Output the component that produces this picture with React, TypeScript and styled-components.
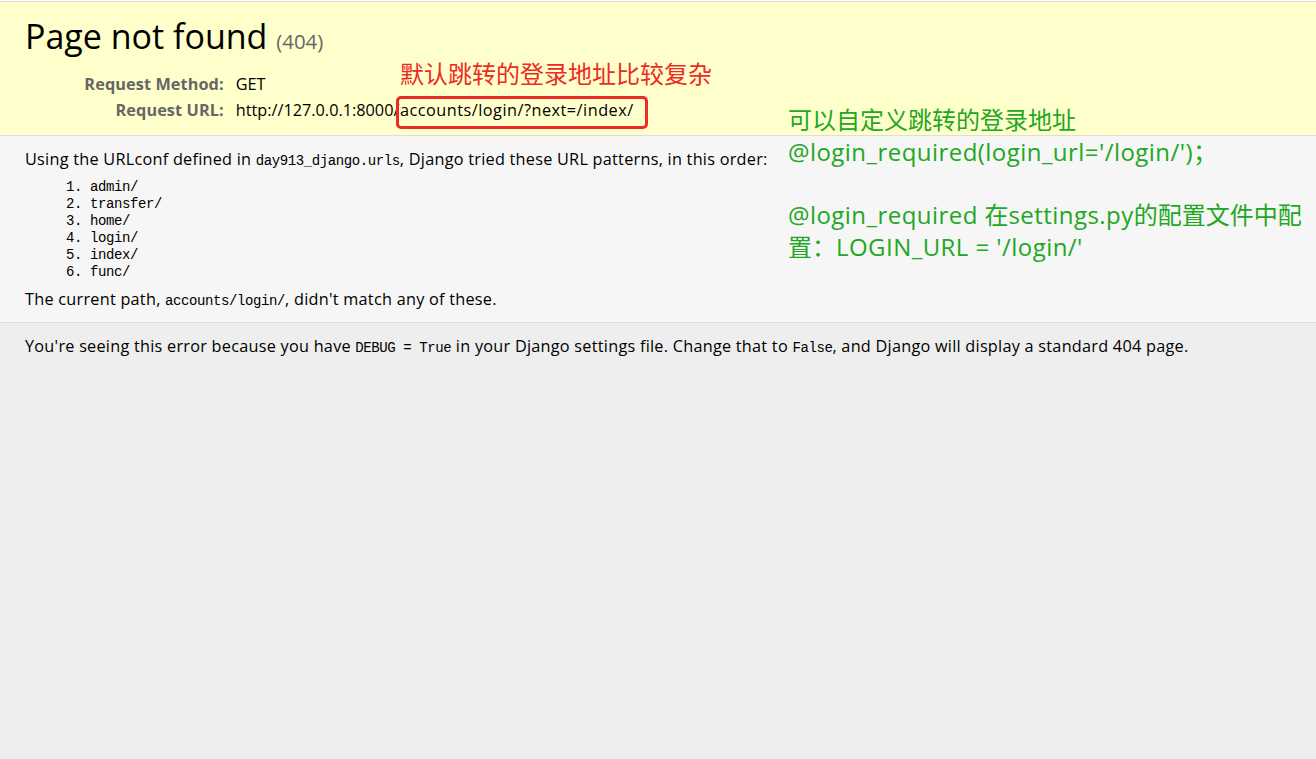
import React from "react";
import styled, { createGlobalStyle } from "styled-components";

const Global = createGlobalStyle`
  html, body { margin: 0; padding: 0; }
  body { background: #eee; }
  * { box-sizing: content-box; }
`;

const sans = `"Open Sans", "Noto Sans CJK SC", sans-serif`;
const mono = `"Liberation Mono", "DejaVu Sans Mono", monospace`;

const Page = styled.div`
  position: relative;
  min-height: 100vh;
  background: #eee;
  border-top: 1px solid #fff;
  font-family: ${sans};
  font-size: 16.25px;
  letter-spacing: 0.25px;
  color: #000;
`;

const Section = styled.div<{ $bg: string; $pt: number; $pb: number; $last?: boolean }>`
  background: ${(p) => p.$bg};
  padding: ${(p) => `${p.$pt}px 25px ${p.$pb}px`};
  border-bottom: ${(p) => (p.$last ? "none" : "1px solid #ddd")};
`;

const Summary = styled(Section)`
  border-top: 1px solid #ddd;
`;

const Title = styled.h1`
  margin: 0 0 10px;
  font-weight: normal;
  font-size: 34px;
  letter-spacing: 0;
  line-height: 42px;
`;

const Code = styled.span`
  color: #666;
  font-size: 60%;
`;

const Meta = styled.div`
  display: grid;
  grid-template-columns: 206.75px auto;
`;

const MetaLabel = styled.div`
  padding: 2.5px 8px 2.5px 3.75px;
  text-align: right;
  font-weight: bold;
  color: #666;
  line-height: 21px;
  letter-spacing: 0.1px;
`;

const MetaValue = styled.div`
  padding: 2.5px 3.75px 2.5px 4px;
  line-height: 21px;
  letter-spacing: 0;
`;

const UrlPath = styled.span`
  letter-spacing: 0.5px;
`;

const Para = styled.p`
  margin: 0;
  line-height: 22px;
`;

const Tt = styled.code`
  font-family: ${mono};
  font-size: 14px;
  letter-spacing: -0.4px;
`;

const Patterns = styled.ol`
  margin: 7px 65px 7px;
  padding: 0;
`;

const Pattern = styled.li`
  font-family: ${mono};
  font-size: 14px;
  line-height: 17px;
  letter-spacing: -0.4px;
`;

const RedNote = styled.div`
  position: absolute;
  left: 400px;
  top: 56px;
  font-family: "Noto Sans CJK SC", sans-serif;
  font-size: 24px;
  line-height: 32px;
  letter-spacing: 0;
  color: #ee2a24;
  white-space: nowrap;
`;

const RedBox = styled.div`
  position: absolute;
  left: 396px;
  top: 95px;
  width: 246px;
  height: 27px;
  border: 3px solid #ee2a24;
  border-radius: 5px;
`;

const GreenNote = styled.div`
  position: absolute;
  left: 788px;
  top: 102px;
  font-family: "Open Sans", "Noto Sans CJK SC", sans-serif;
  font-size: 24px;
  line-height: 31px;
  letter-spacing: 0.45px;
  color: #22a722;
  white-space: pre;
`;

const GreenCjk = styled.span`
  font-family: "Noto Sans CJK SC", sans-serif;
  letter-spacing: 0;
`;

export default function App() {
  const patterns = ["admin/", "transfer/", "home/", "login/", "index/", "func/"];
  return (
    <Page>
      <Global />
      <Summary $bg="#ffc" $pt={12.5} $pb={11}>
        <Title>
          Page not found <Code>(404)</Code>
        </Title>
        <Meta>
          <MetaLabel>Request Method:</MetaLabel>
          <MetaValue>GET</MetaValue>
          <MetaLabel>Request URL:</MetaLabel>
          <MetaValue>
            http://127.0.0.1:8000<UrlPath>/accounts/login/?next=/index/</UrlPath>
          </MetaValue>
        </Meta>
      </Summary>
      <Section $bg="#f6f6f6" $pt={12.5} $pb={9.5}>
        <Para>
          Using the URLconf defined in <Tt>day913_django.urls</Tt>, Django tried these URL
          patterns, in this order:
        </Para>
        <Patterns>
          {patterns.map((p) => (
            <Pattern key={p}>{p}</Pattern>
          ))}
        </Patterns>
        <Para>
          The current path, <Tt>accounts/login/</Tt>, didn't match any of these.
        </Para>
      </Section>
      <Section $bg="#eee" $pt={12.5} $pb={12.5} $last>
        <Para>
          You're seeing this error because you have <Tt>DEBUG = True</Tt> in your Django
          settings file. Change that to <Tt>False</Tt>, and Django will display a standard 404
          page.
        </Para>
      </Section>
      <RedNote>默认跳转的登录地址比较复杂</RedNote>
      <RedBox />
      <GreenNote>
        <GreenCjk>可以自定义跳转的登录地址</GreenCjk>
        {"\n@login_required(login_url='/login/')"}
        <GreenCjk>；</GreenCjk>
        {"\n\n@login_required "}
        <GreenCjk>在</GreenCjk>settings.py<GreenCjk>的配置文件中配</GreenCjk>
        {"\n"}
        <GreenCjk>置：</GreenCjk>
        {"LOGIN_URL = '/login/'"}
      </GreenNote>
    </Page>
  );
}
